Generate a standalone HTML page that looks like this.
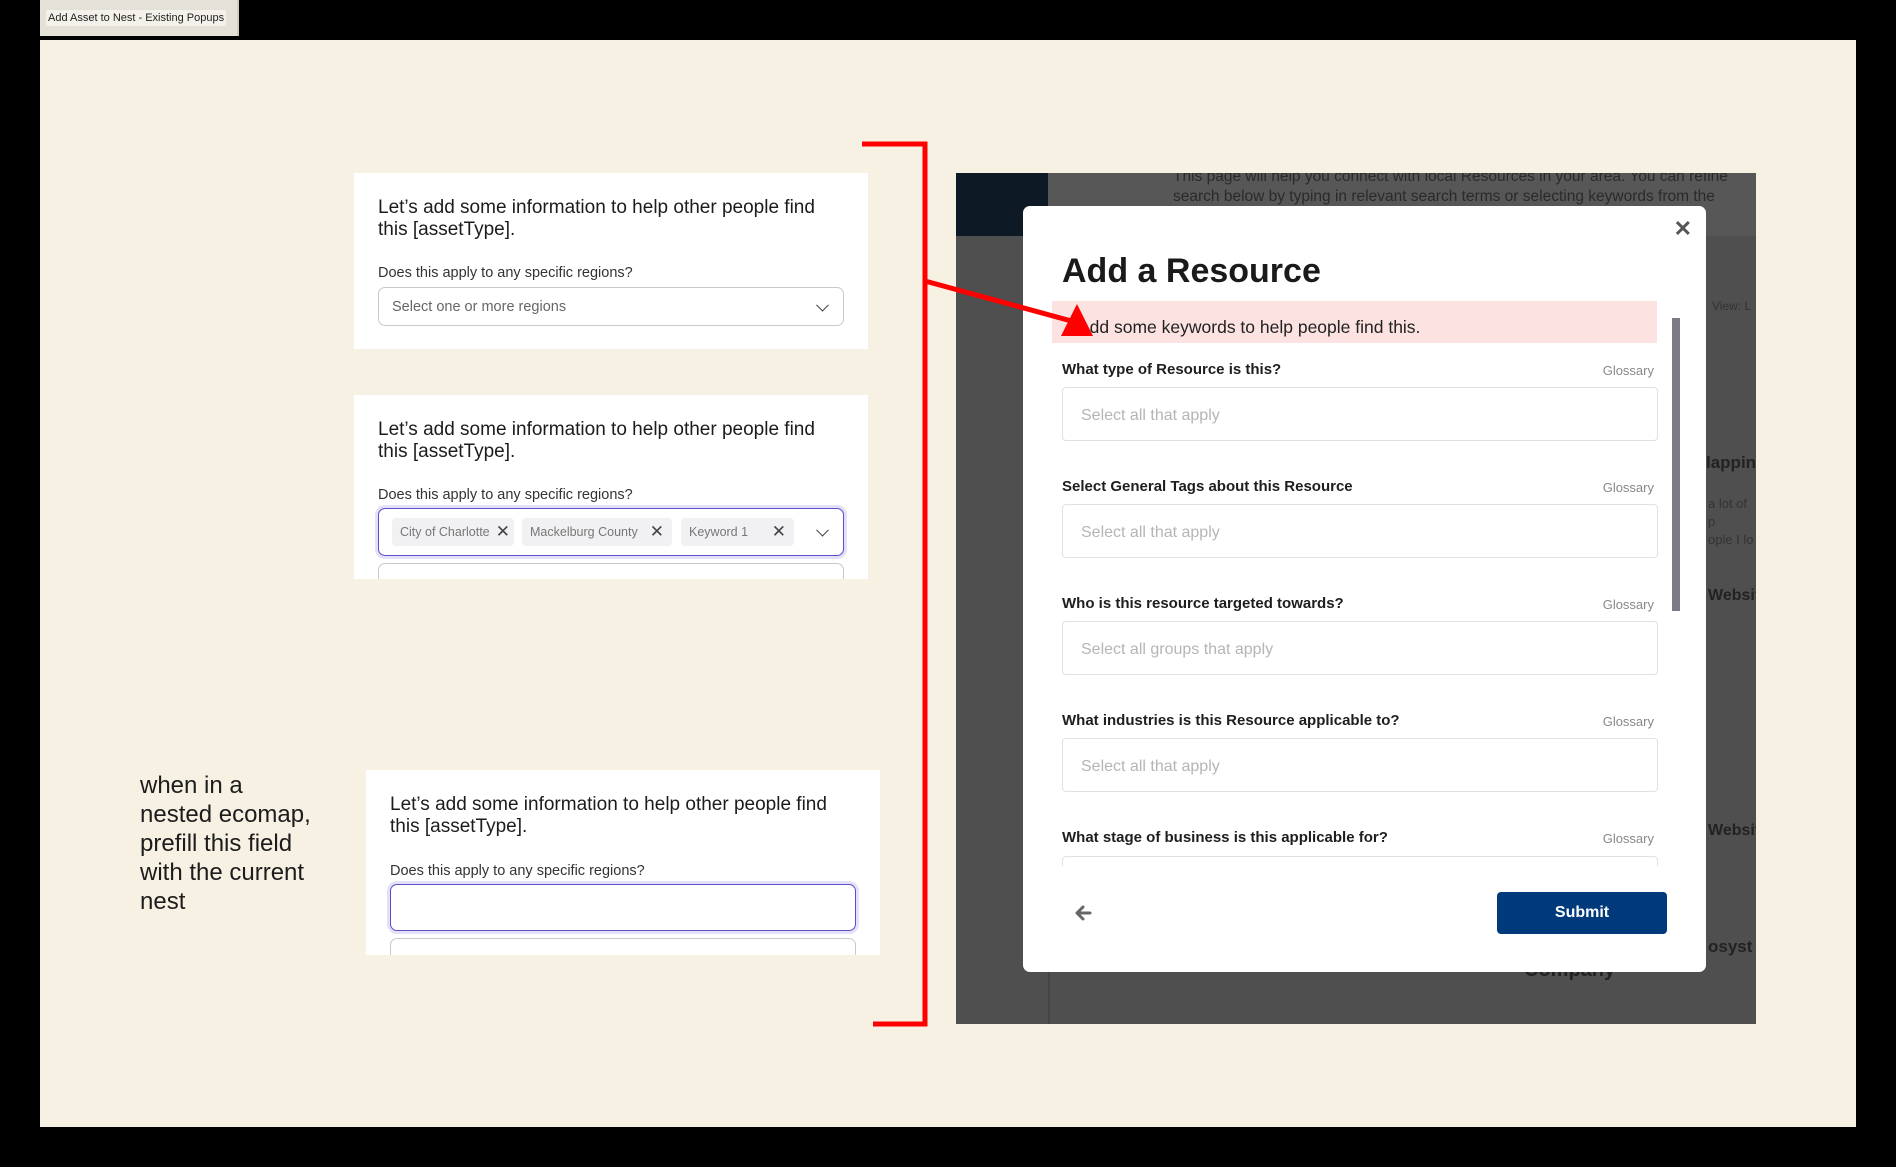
<!DOCTYPE html>
<html><head><meta charset="utf-8"><style>
*{box-sizing:border-box;margin:0;padding:0}
body{width:1896px;height:1167px;background:#000;position:relative;overflow:hidden;font-family:"Liberation Sans",sans-serif}
.abs{position:absolute}
.cream{left:40px;top:40px;width:1816px;height:1087px;background:#f7f1e3}
.tab{left:40px;top:0;width:199px;height:36px;background:#e4e1d9;border-right:2px solid #cfccc5}
.tab span{position:absolute;left:6px;top:10px;font-size:11px;color:#222;background:#f4f1ea;padding:2px 2px}
.card{background:#fff}
.q{position:absolute;left:24px;font-size:19px;line-height:22px;color:#1c1c1c}
.lbl{position:absolute;left:24px;font-size:14.5px;color:#333}
.sel{position:absolute;left:24px;width:466px;border:1.5px solid #c9c9cd;border-radius:7px;background:#fff}
.chev{position:absolute;right:16px;top:50%;width:9px;height:9px;border-right:1.6px solid #444;border-bottom:1.6px solid #444;transform:translateY(-70%) rotate(45deg)}
.chip{position:absolute;top:9px;height:28px;background:#f1f1f4;border-radius:4px;font-size:12.5px;color:#777;line-height:28px;padding-left:8px}
.chip b{position:absolute;right:8px;top:0;font-size:17px;color:#444;font-weight:normal}
.shot{left:956px;top:173px;width:800px;height:851px;background:#4f4f4f;overflow:hidden}
.modal{left:1023px;top:206px;width:683px;height:766px;background:#fff;border-radius:7px}
.fl{position:absolute;left:39px;font-size:15px;font-weight:bold;color:#1e1e1e}
.gl{position:absolute;right:52px;font-size:13px;color:#888}
.inp{position:absolute;left:39px;width:596px;height:54px;border:1.5px solid #e0e0e0;border-radius:4px;font-size:16px;color:#b5b5b5;padding:19px 0 0 18px}
</style></head><body>
<div class="abs cream"></div>
<div class="abs tab"><span>Add Asset to Nest - Existing Popups</span></div>

<div class="abs card" style="left:354px;top:173px;width:514px;height:176px">
 <div class="q" style="top:24px">Let’s add some information to help other people find<br>this [assetType].</div>
 <div class="lbl" style="top:92px">Does this apply to any specific regions?</div>
 <div class="sel" style="top:114px;height:39px"><span style="position:absolute;left:13px;top:11px;font-size:14.5px;color:#666">Select one or more regions</span><div class="chev"></div></div>
</div>

<div class="abs card" style="left:354px;top:395px;width:514px;height:184px;overflow:hidden">
 <div class="q" style="top:24px">Let’s add some information to help other people find<br>this [assetType].</div>
 <div class="lbl" style="top:92px">Does this apply to any specific regions?</div>
 <div class="sel" style="top:113px;height:48px;border:1.5px solid #5a4fc8;box-shadow:0 0 0 3px #e3e1f7">
  <div class="chip" style="left:13px;width:122px">City of Charlotte<b style="right:4px">✕</b></div>
  <div class="chip" style="left:143px;width:150px">Mackelburg County<b>✕</b></div>
  <div class="chip" style="left:302px;width:113px">Keyword 1<b>✕</b></div>
  <div class="chev"></div>
 </div>
 <div class="sel" style="top:168px;height:40px"></div>
</div>

<div class="abs" style="left:140px;top:771px;font-size:24px;line-height:29px;color:#1c1c1c">when in a<br>nested ecomap,<br>prefill this field<br>with the current<br>nest</div>

<div class="abs card" style="left:366px;top:770px;width:514px;height:185px;overflow:hidden">
 <div class="q" style="top:24px">Let’s add some information to help other people find<br>this [assetType].</div>
 <div class="lbl" style="top:93px">Does this apply to any specific regions?</div>
 <div class="sel" style="top:114px;height:47px;border:1.5px solid #5a4fc8;box-shadow:0 0 0 3px #e3e1f7"></div>
 <div class="sel" style="top:168px;height:40px"></div>
</div>

<!-- screenshot -->
<div class="abs shot">
 <div class="abs" style="left:0;top:0;width:92px;height:63px;background:#0d1a26"></div>
 <div class="abs" style="left:92px;top:0;width:708px;height:63px;background:#575757"></div>
 <div class="abs" style="left:217px;top:-6px;font-size:15.5px;line-height:20px;color:#2a2a2a;white-space:nowrap">This page will help you connect with local Resources in your area. You can refine<br>search below by typing in relevant search terms or selecting keywords from the</div>
 <div class="abs" style="left:756px;top:126px;font-size:12px;color:#333">View: L</div>
 <div class="abs" style="left:750px;top:280px;font-size:17px;font-weight:bold;color:#222">lappin</div>
 <div class="abs" style="left:752px;top:322px;font-size:13px;line-height:18px;color:#333">a lot of p<br>ople I lo</div>
 <div class="abs" style="left:752px;top:414px;font-size:16px;font-weight:bold;color:#222">Websit</div>
 <div class="abs" style="left:752px;top:649px;font-size:16px;font-weight:bold;color:#222">Websit</div>
 <div class="abs" style="left:752px;top:764px;font-size:17px;font-weight:bold;color:#222">osyst</div>
 <div class="abs" style="left:568px;top:786px;font-size:20px;font-weight:bold;color:#222">Company</div>
 <div class="abs" style="left:92px;top:63px;width:2px;height:788px;background:#444"></div>
</div>

<div class="abs modal">
 <div style="position:absolute;right:14px;top:10px;font-size:22px;color:#555;font-weight:bold">✕</div>
 <div style="position:absolute;left:39px;top:46px;font-size:34px;font-weight:bold;color:#1a1a1a">Add a Resource</div>
 <div style="position:absolute;left:29px;top:95px;width:605px;height:42px;background:#fde2e2"></div>
 <div style="position:absolute;left:55px;top:111px;font-size:17.5px;color:#222">Add some keywords to help people find this.</div>
 <div style="position:absolute;left:649px;top:112px;width:8px;height:293px;background:#7b7b85"></div>
 <div class="fl" style="top:155px">What type of Resource is this?</div><div class="gl" style="top:157px">Glossary</div>
 <div class="inp" style="top:181px">Select all that apply</div>
 <div class="fl" style="top:272px">Select General Tags about this Resource</div><div class="gl" style="top:274px">Glossary</div>
 <div class="inp" style="top:298px">Select all that apply</div>
 <div class="fl" style="top:389px">Who is this resource targeted towards?</div><div class="gl" style="top:391px">Glossary</div>
 <div class="inp" style="top:415px">Select all groups that apply</div>
 <div class="fl" style="top:506px">What industries is this Resource applicable to?</div><div class="gl" style="top:508px">Glossary</div>
 <div class="inp" style="top:532px">Select all that apply</div>
 <div class="fl" style="top:623px">What stage of business is this applicable for?</div><div class="gl" style="top:625px">Glossary</div>
 <div style="position:absolute;left:39px;top:650px;width:596px;height:10px;border:1.5px solid #e0e0e0;border-bottom:none;border-radius:4px 4px 0 0"></div>
 <svg style="position:absolute;left:51px;top:698px" width="18" height="18" viewBox="0 0 18 18"><path d="M16 9H4M9 3L3 9l6 6" fill="none" stroke="#666" stroke-width="3" stroke-linecap="round" stroke-linejoin="round"/></svg>
 <div style="position:absolute;left:474px;top:686px;width:170px;height:42px;background:#003a7a;border-radius:4px;color:#fff;font-weight:bold;font-size:16px;text-align:center;line-height:42px">Submit</div>
</div>

<svg class="abs" style="left:0;top:0" width="1896" height="1167">
 <polyline points="862,144 925,144 925,1024 873,1024" fill="none" stroke="#f00" stroke-width="5"/>
 <line x1="925" y1="281" x2="1075" y2="322" stroke="#f00" stroke-width="5"/>
 <polygon points="1077,304 1061,336 1093,336" fill="#f00"/>
</svg>
</body></html>
